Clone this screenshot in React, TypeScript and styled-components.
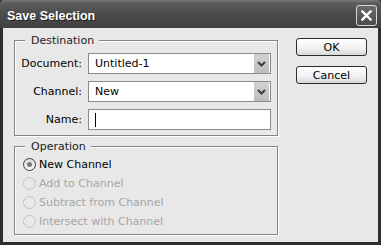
import { createGlobalStyle, styled } from 'styled-components';

const GlobalStyle = createGlobalStyle`
  body {
    margin: 0;
    background: #fff;
  }
`;

const App = () => {
  const operations = [
    { label: 'New Channel', checked: true, disabled: false },
    { label: 'Add to Channel', checked: false, disabled: true },
    { label: 'Subtract from Channel', checked: false, disabled: true },
    { label: 'Intersect with Channel', checked: false, disabled: true },
  ];

  return (
    <>
      <GlobalStyle />
      <Window>
        <TitleBar>
          <Title>Save Selection</Title>
          <CloseButton>
            <svg width="11" height="11" viewBox="0 0 11 11">
              <path d="M1.5 1.5 L9.5 9.5 M9.5 1.5 L1.5 9.5" stroke="#fff" strokeWidth="2.4" strokeLinecap="square" />
            </svg>
          </CloseButton>
        </TitleBar>
        <Body>
          <LeftCol>
            <GroupBox $height={96}>
              <Legend>Destination</Legend>
              <FormGrid>
                <Label>Document:</Label>
                <Field>
                  <Value>Untitled-1</Value>
                  <DropArrow>
                    <svg width="9" height="6" viewBox="0 0 9 6">
                      <path d="M1 1 L4.5 4.5 L8 1" fill="none" stroke="#3c3c3c" strokeWidth="2" />
                    </svg>
                  </DropArrow>
                </Field>
                <Label>Channel:</Label>
                <Field>
                  <Value>New</Value>
                  <DropArrow>
                    <svg width="9" height="6" viewBox="0 0 9 6">
                      <path d="M1 1 L4.5 4.5 L8 1" fill="none" stroke="#3c3c3c" strokeWidth="2" />
                    </svg>
                  </DropArrow>
                </Field>
                <Label>Name:</Label>
                <Field>
                  <Caret />
                </Field>
              </FormGrid>
            </GroupBox>
            <GroupBox $height={89}>
              <Legend>Operation</Legend>
              <RadioList>
                {operations.map((op) => (
                  <RadioRow key={op.label} $disabled={op.disabled}>
                    <RadioCircle $disabled={op.disabled}>{op.checked && <RadioDot />}</RadioCircle>
                    {op.label}
                  </RadioRow>
                ))}
              </RadioList>
            </GroupBox>
          </LeftCol>
          <RightCol>
            <Button>OK</Button>
            <Button>Cancel</Button>
          </RightCol>
        </Body>
      </Window>
    </>
  );
};

export default App;

const Window = styled.div`
  width: 381px;
  height: 245px;
  box-sizing: border-box;
  background: #2e2e2e;
  padding: 0 3px 3px 3px;
  display: flex;
  flex-direction: column;
  font-family: 'DejaVu Sans', Verdana, sans-serif;
  font-size: 11px;
  color: #000;
`;

const TitleBar = styled.div`
  height: 28px;
  margin: 0 -3px;
  padding: 0 4px 0 7px;
  display: flex;
  align-items: center;
  justify-content: space-between;
  background: linear-gradient(#7a7a7a 0, #5c5c5c 3px, #4c4c4c 50%, #404040 100%);
  border-radius: 4px 4px 0 0;
`;

const Title = styled.span`
  color: #fff;
  font-family: 'Liberation Sans', Arial, sans-serif;
  font-weight: 700;
  font-size: 12.5px;
  text-shadow: 1px 1px 0 #1e1e1e;
  margin-top: 3px;
`;

const CloseButton = styled.div`
  width: 21px;
  height: 21px;
  box-sizing: border-box;
  margin-top: 2px;
  border: 1px solid #d8d8d8;
  border-radius: 3px;
  background: linear-gradient(#6c6c6c, #4a4a4a);
  display: flex;
  align-items: center;
  justify-content: center;
`;

const Body = styled.div`
  flex: 1;
  background: #e8e8e8;
  display: flex;
  gap: 18px;
  padding: 10px 0 0 11px;
`;

const LeftCol = styled.div`
  width: 264px;
  padding-top: 2px;
  display: flex;
  flex-direction: column;
  gap: 10px;
`;

const GroupBox = styled.div<{ $height: number }>`
  position: relative;
  height: ${(p) => p.$height}px;
  box-sizing: border-box;
  border: 1px solid #858585;
  box-shadow: 1px 1px 0 #fff, inset 1px 1px 0 #fff;
`;

const Legend = styled.span`
  position: absolute;
  top: -8px;
  left: 10px;
  padding: 0 5px 0 6px;
  background: #e8e8e8;
  color: #222;
  line-height: 15px;
`;

const FormGrid = styled.div`
  display: grid;
  grid-template-columns: 67px 183px;
  column-gap: 6px;
  row-gap: 7px;
  padding: 12px 0 0 0;
`;

const Label = styled.div`
  text-align: right;
  line-height: 21px;
`;

const Field = styled.div`
  height: 21px;
  box-sizing: border-box;
  border: 1px solid #8a8a8a;
  background: #fff;
  display: flex;
  align-items: center;
  padding: 0 1px 0 6px;
`;

const Value = styled.span`
  flex: 1;
`;

const DropArrow = styled.div`
  width: 15px;
  align-self: stretch;
  background: linear-gradient(#d2d2d2, #bdbdbd);
  display: flex;
  align-items: center;
  justify-content: center;
`;

const Caret = styled.span`
  width: 1px;
  height: 14px;
  background: #000;
`;

const RadioList = styled.div`
  display: flex;
  flex-direction: column;
  padding: 8px 0 0 8px;
`;

const RadioRow = styled.div<{ $disabled: boolean }>`
  height: 19px;
  display: flex;
  align-items: center;
  gap: 3px;
  color: ${(p) => (p.$disabled ? '#a6a6a6' : '#000')};
`;

const RadioCircle = styled.span<{ $disabled: boolean }>`
  width: 13px;
  height: 13px;
  box-sizing: border-box;
  border-radius: 50%;
  border: 1px solid ${(p) => (p.$disabled ? '#c4c4c4' : '#3e3e3e')};
  background: ${(p) => (p.$disabled ? '#e8e8e8' : 'linear-gradient(#dcdcdc, #fafafa)')};
  display: flex;
  align-items: center;
  justify-content: center;
`;

const RadioDot = styled.span`
  width: 5px;
  height: 5px;
  border-radius: 50%;
  background: #7a7a7a;
`;

const RightCol = styled.div`
  display: flex;
  flex-direction: column;
  gap: 10px;
`;

const Button = styled.div`
  width: 71px;
  height: 18px;
  box-sizing: border-box;
  border: 1px solid #2c2c2c;
  border-radius: 3px;
  background: linear-gradient(#ffffff, #f0f0f0 60%, #d8d8d8);
  display: flex;
  align-items: center;
  justify-content: center;
`;
